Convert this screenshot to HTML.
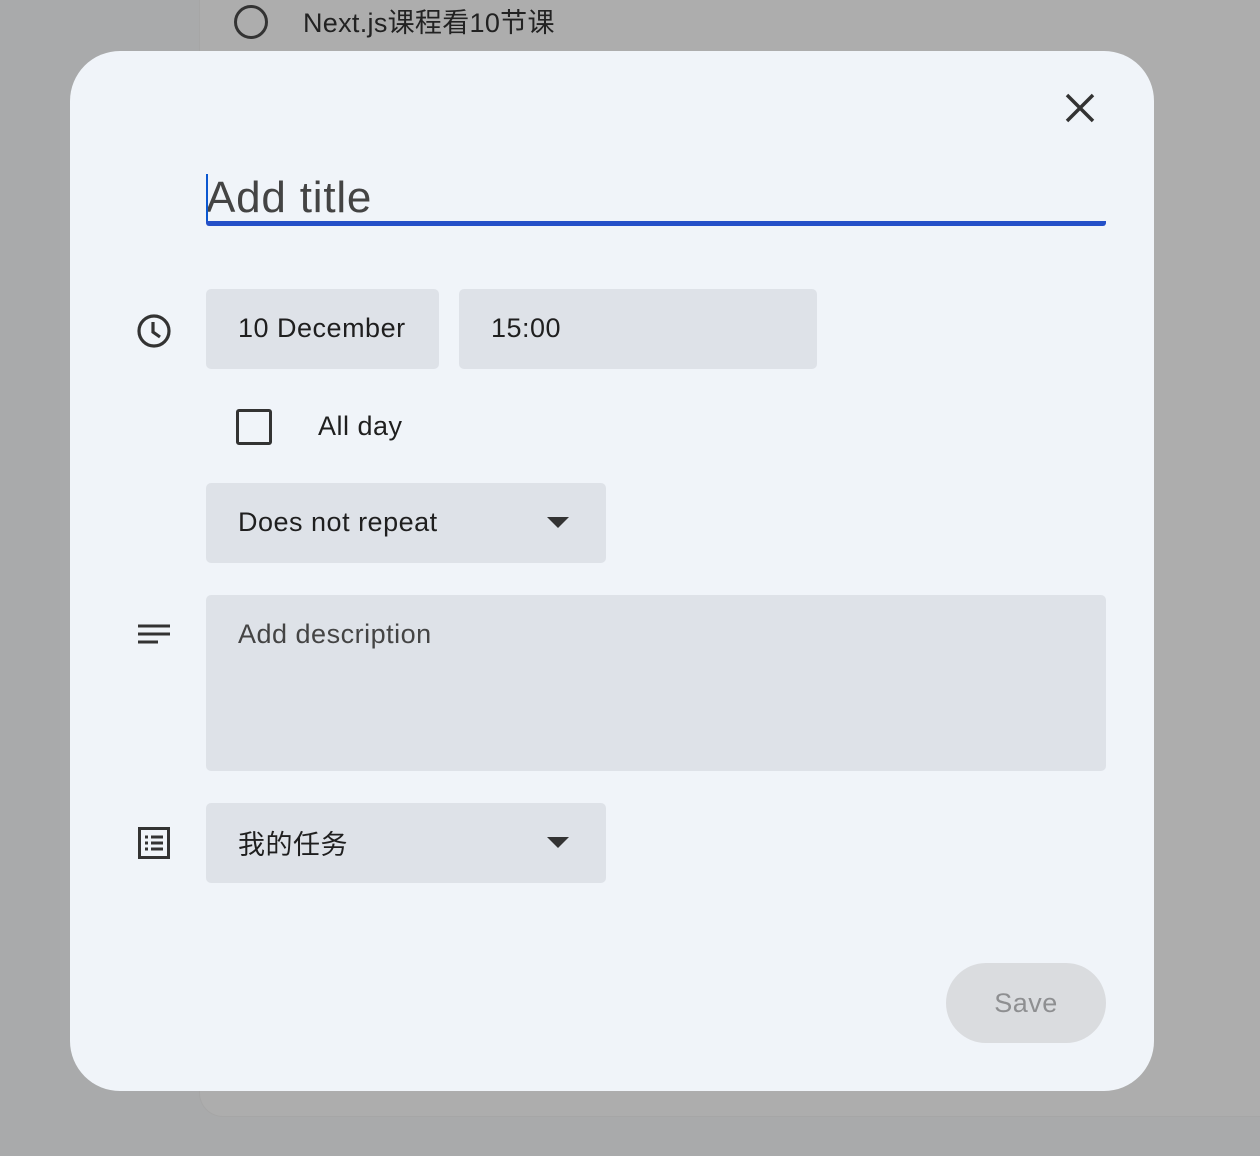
<!DOCTYPE html>
<html><head><meta charset="utf-8"><style>
*{margin:0;padding:0;box-sizing:border-box}
body{width:1260px;height:1156px;background:#a9aaab;position:relative;overflow:hidden;font-family:"Liberation Sans","Noto Sans CJK SC",sans-serif;color:#1f1f1f}
.panel{position:absolute;left:199px;top:-20px;width:1100px;height:1137px;background:#adadad;border-left:1px solid #a6a6a6;border-bottom:1px solid #a6a6a6;border-bottom-left-radius:24px}
.top{position:absolute;left:234px;top:5px;width:34px;height:34px;border:3px solid #333;border-radius:50%}
.toptxt{position:absolute;left:303px;top:1px;font-size:27px;color:#222;letter-spacing:0.3px}
.dlg{position:absolute;left:70px;top:51px;width:1084px;height:1040px;background:#f0f4f9;border-radius:50px}
.f{position:absolute;background:#dee2e8;border-radius:5px;font-size:27px;color:#1f1f1f;letter-spacing:0.5px}
.abs{position:absolute}
</style></head><body>
<div class="panel"></div>
<div class="top"></div>
<div class="toptxt">Next.js课程看10节课</div>
<div class="dlg"></div>
<svg class="abs" style="left:1062px;top:90px" width="36" height="36" viewBox="0 0 36 36"><path d="M5 5L31 31M31 5L5 31" stroke="#333" stroke-width="3.5"/></svg>
<div class="abs" style="left:206px;top:173px;font-size:44px;color:#444;letter-spacing:0.8px">Add title</div>
<div class="abs" style="left:206px;top:174px;width:2px;height:48px;background:#0b57d0"></div>
<div class="abs" style="left:206px;top:221px;width:900px;height:5px;background:#2450c8;border-radius:0 0 3px 3px"></div>
<svg class="abs" style="left:136px;top:313px" width="36" height="36" viewBox="0 0 36 36"><circle cx="18" cy="18" r="15" fill="none" stroke="#333" stroke-width="3.2"/><path d="M17 9v10l7 5" fill="none" stroke="#333" stroke-width="3.2"/></svg>
<div class="f" style="left:206px;top:289px;width:233px;height:80px;padding:24px 32px">10 December</div>
<div class="f" style="left:459px;top:289px;width:358px;height:80px;padding:24px 32px">15:00</div>
<div class="abs" style="left:236px;top:409px;width:36px;height:36px;border:3px solid #333;border-radius:3px"></div>
<div class="abs" style="left:318px;top:411px;font-size:27px;letter-spacing:0.5px">All day</div>
<div class="f" style="left:206px;top:483px;width:400px;height:80px;padding:24px 32px">Does not repeat</div>
<svg class="abs" style="left:547px;top:517px" width="22" height="12"><path d="M0 0h22L11 11z" fill="#333"/></svg>
<svg class="abs" style="left:138px;top:624px" width="32" height="24"><path d="M0 2h32M0 10h32M0 18h20" stroke="#333" stroke-width="3"/></svg>
<div class="f" style="left:206px;top:595px;width:900px;height:176px;padding:24px 32px;color:#444">Add description</div>
<svg class="abs" style="left:138px;top:827px" width="32" height="32" viewBox="0 0 32 32"><rect x="1.5" y="1.5" width="29" height="29" fill="none" stroke="#333" stroke-width="3"/><path d="M7 10h3M13 10h12M7 16h3M13 16h12M7 22h3M13 22h12" stroke="#333" stroke-width="3"/></svg>
<div class="f" style="left:206px;top:803px;width:400px;height:80px;padding:20px 32px">我的任务</div>
<svg class="abs" style="left:547px;top:837px" width="22" height="12"><path d="M0 0h22L11 11z" fill="#333"/></svg>
<div class="abs" style="left:946px;top:963px;width:160px;height:80px;border-radius:40px;background:#dadcdf;color:#8e8f91;font-size:27px;text-align:center;line-height:80px;letter-spacing:0.5px">Save</div>
</body></html>
